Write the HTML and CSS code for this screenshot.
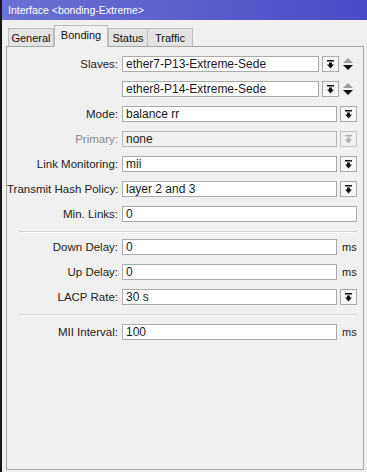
FILE: index.html
```html
<!DOCTYPE html>
<html>
<head>
<meta charset="utf-8">
<link rel="stylesheet" href="styles.css">
</head>
<body>
<div class="win">
  <div class="title">Interface &lt;bonding-Extreme&gt;</div>
  <div class="tabs">
    <div class="tab w-general">General</div>
    <div class="tab active w-bonding">Bonding</div>
    <div class="tab w-status">Status</div>
    <div class="tab w-traffic">Traffic</div>
  </div>
  <div class="panel">
    <div class="row">
      <div class="lbl">Slaves:</div>
      <div class="field">
        <div class="input">ether7-P13-Extreme-Sede</div>
        <div class="btn"><svg width="7" height="9" viewBox="0 0 7 9"><rect x="0" y="0" width="7" height="1.5"/><rect x="2" y="2.5" width="3" height="2.5"/><polygon points="0,4.5 7,4.5 3.5,8.5"/></svg></div>
        <div class="updown"><svg width="10" height="12" viewBox="0 0 10 12"><polygon points="0,5 5,0 10,5" class="up"/><polygon points="0,7 10,7 5,12"/></svg></div>
      </div>
    </div>
    <div class="row">
      <div class="lbl"></div>
      <div class="field">
        <div class="input">ether8-P14-Extreme-Sede</div>
        <div class="btn"><svg width="7" height="9" viewBox="0 0 7 9"><rect x="0" y="0" width="7" height="1.5"/><rect x="2" y="2.5" width="3" height="2.5"/><polygon points="0,4.5 7,4.5 3.5,8.5"/></svg></div>
        <div class="updown"><svg width="10" height="12" viewBox="0 0 10 12"><polygon points="0,5 5,0 10,5" class="up"/><polygon points="0,7 10,7 5,12"/></svg></div>
      </div>
    </div>
    <div class="row">
      <div class="lbl">Mode:</div>
      <div class="field">
        <div class="input">balance rr</div>
        <div class="btn"><svg width="7" height="9" viewBox="0 0 7 9"><rect x="0" y="0" width="7" height="1.5"/><rect x="2" y="2.5" width="3" height="2.5"/><polygon points="0,4.5 7,4.5 3.5,8.5"/></svg></div>
      </div>
    </div>
    <div class="row disabled">
      <div class="lbl">Primary:</div>
      <div class="field">
        <div class="input">none</div>
        <div class="btn"><svg width="7" height="9" viewBox="0 0 7 9"><rect x="0" y="0" width="7" height="1.5"/><rect x="2" y="2.5" width="3" height="2.5"/><polygon points="0,4.5 7,4.5 3.5,8.5"/></svg></div>
      </div>
    </div>
    <div class="row">
      <div class="lbl">Link Monitoring:</div>
      <div class="field">
        <div class="input">mii</div>
        <div class="btn"><svg width="7" height="9" viewBox="0 0 7 9"><rect x="0" y="0" width="7" height="1.5"/><rect x="2" y="2.5" width="3" height="2.5"/><polygon points="0,4.5 7,4.5 3.5,8.5"/></svg></div>
      </div>
    </div>
    <div class="row">
      <div class="lbl">Transmit Hash Policy:</div>
      <div class="field">
        <div class="input">layer 2 and 3</div>
        <div class="btn"><svg width="7" height="9" viewBox="0 0 7 9"><rect x="0" y="0" width="7" height="1.5"/><rect x="2" y="2.5" width="3" height="2.5"/><polygon points="0,4.5 7,4.5 3.5,8.5"/></svg></div>
      </div>
    </div>
    <div class="row">
      <div class="lbl">Min. Links:</div>
      <div class="field">
        <div class="input">0</div>
      </div>
    </div>
    <div class="sep sep1"></div>
    <div class="row">
      <div class="lbl">Down Delay:</div>
      <div class="field">
        <div class="input">0</div>
        <div class="unit">ms</div>
      </div>
    </div>
    <div class="row">
      <div class="lbl">Up Delay:</div>
      <div class="field">
        <div class="input">0</div>
        <div class="unit">ms</div>
      </div>
    </div>
    <div class="row">
      <div class="lbl">LACP Rate:</div>
      <div class="field">
        <div class="input">30 s</div>
        <div class="btn"><svg width="7" height="9" viewBox="0 0 7 9"><rect x="0" y="0" width="7" height="1.5"/><rect x="2" y="2.5" width="3" height="2.5"/><polygon points="0,4.5 7,4.5 3.5,8.5"/></svg></div>
      </div>
    </div>
    <div class="sep sep2"></div>
    <div class="row">
      <div class="lbl">MII Interval:</div>
      <div class="field">
        <div class="input">100</div>
        <div class="unit">ms</div>
      </div>
    </div>
  </div>
</div>
</body>
</html>
```

FILE: styles.css
```css
html, body {
  margin: 0;
  padding: 0;
}
body {
  background: #f0f0f0;
  font-family: "Liberation Sans", Arial, sans-serif;
  color: #1a1a1a;
}
.win {
  height: 472px;
  box-sizing: border-box;
  border-left: 2px solid #161616;
  display: flex;
  flex-direction: column;
}
.title {
  height: 20px;
  flex: none;
  background: linear-gradient(to right, #6c72d3, #4b4ac6);
  color: #fff;
  font-size: 10.5px;
  line-height: 21px;
  padding-left: 6px;
}
.tabs {
  display: flex;
  align-items: flex-end;
  padding-left: 6px;
  margin-top: 5px;
  height: 21px;
  flex: none;
  position: relative;
  z-index: 1;
}
.tab {
  box-sizing: border-box;
  height: 18px;
  background: #e3e3e3;
  border: 1px solid #bdbdbd;
  border-bottom: none;
  font-size: 11px;
  line-height: 18px;
  text-align: center;
  color: #111;
}
.tab + .tab {
  border-left: none;
}
.tab.active {
  height: 22px;
  margin-bottom: -1px;
  background: #f0f0f0;
  border-left: 1px solid #bdbdbd;
  line-height: 19px;
}
.tab.active + .tab {
  border-left: 1px solid #bdbdbd;
}
.w-general { width: 46px; }
.w-bonding { width: 54px; }
.w-status { width: 40px; }
.w-traffic { width: 45px; }
.panel {
  flex: 1;
  margin: 0 3px 2px 4px;
  border: 1px solid #a8a8a8;
  background: #f0f0f0;
  padding: 9px 6px 0 0;
}
.row {
  display: flex;
  align-items: center;
  height: 16px;
  margin-bottom: 9px;
}
.lbl {
  width: 111px;
  flex: none;
  margin-right: 4px;
  text-align: right;
  font-size: 11.5px;
  color: #222;
  white-space: nowrap;
}
.field {
  flex: 1;
  display: flex;
  height: 16px;
}
.input {
  flex: 1;
  box-sizing: border-box;
  height: 16px;
  background: #fff;
  border: 1px solid #ababab;
  padding-left: 3px;
  font-size: 12px;
  line-height: 14px;
  color: #1a1a1a;
  white-space: nowrap;
  overflow: hidden;
}
.btn {
  flex: none;
  box-sizing: border-box;
  width: 17px;
  height: 16px;
  margin-left: 3px;
  border: 1px solid #ababab;
  background: #f7f7f7;
  display: flex;
  align-items: center;
  justify-content: center;
}
.btn svg {
  fill: #111;
}
.updown {
  flex: none;
  width: 18px;
  display: flex;
  align-items: center;
  justify-content: center;
}
.updown svg {
  fill: #111;
}
.updown .up {
  fill: #9c9c9c;
}
.unit {
  flex: none;
  width: 20px;
  box-sizing: border-box;
  padding-left: 5px;
  font-size: 11px;
  line-height: 16px;
  color: #222;
}
.disabled .lbl {
  color: #8c8c8c;
}
.disabled .input {
  background: #f0f0f0;
  border-color: #b8b8b8;
}
.disabled .btn {
  border-color: #c4c4c4;
  background: #f0f0f0;
}
.disabled .btn svg {
  fill: #b0b0b0;
}
.sep {
  height: 0;
  border-top: 1px solid #d4d4d4;
  border-bottom: 1px solid #fbfbfb;
  margin-left: 12px;
}
.sep1 {
  margin-top: 1px;
  margin-bottom: 6px;
}
.sep2 {
  margin-top: 2px;
  margin-bottom: 8px;
}
```
